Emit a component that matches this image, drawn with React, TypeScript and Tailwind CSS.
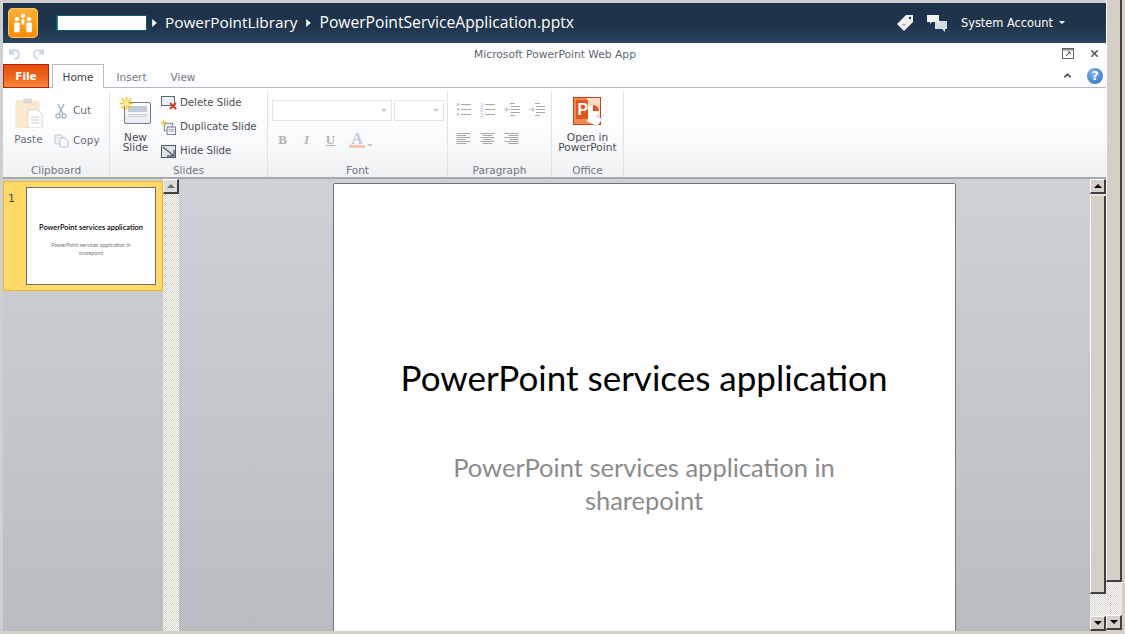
import type { ReactNode } from "react";
import { ChevronUp, X } from "lucide-react";

const ribbonFont = "font-['DejaVu_Sans',sans-serif]";

function GroupLabel({ children }: { children: ReactNode }) {
  return (
    <div className={`absolute -bottom-[2px] left-0 right-0 h-[17px] text-center text-[10.5px] leading-[17px] text-[#6e7686] ${ribbonFont}`}>
      {children}
    </div>
  );
}

function RibbonGroup({ width, label, children }: { width: string; label: string; children: ReactNode }) {
  return (
    <div className={`relative mt-[4px] h-[85px] shrink-0 border-r border-[#dfe2e7] ${width}`}>
      {children}
      <GroupLabel>{label}</GroupLabel>
    </div>
  );
}

function SparkIcon({ className }: { className: string }) {
  return (
    <svg viewBox="0 0 12 12" className={className}>
      <path d="M6 0v12M0 6h12M1.5 1.5l9 9M10.5 1.5l-9 9" stroke="#f4c92e" strokeWidth="1.6" />
      <rect x="4" y="4" width="4" height="4" fill="#fff3a8" />
    </svg>
  );
}

function SlideRow({ icon, label }: { icon: ReactNode; label: string }) {
  return (
    <div className="flex h-[24px] items-center gap-[3px]">
      <span className="flex w-[17px] justify-center">{icon}</span>
      <span className="text-[10.2px] text-[#4c4c55]">{label}</span>
    </div>
  );
}

function LinesIcon({ widths, align }: { widths: number[]; align: "start" | "center" | "end" }) {
  const x = (w: number) => (align === "start" ? 0 : align === "center" ? (14 - w) / 2 : 14 - w);
  return (
    <svg viewBox="0 0 14 14" className="h-[14px] w-[15px]">
      {widths.map((w, i) => (
        <rect key={i} x={x(w)} y={1 + i * 2} width={w} height="1" fill="#a8a8a8" />
      ))}
    </svg>
  );
}

function ListIcon({ numbered }: { numbered?: boolean }) {
  return (
    <svg viewBox="0 0 15 14" className="h-[14px] w-[15px]">
      {[1, 6, 11].map((y, i) => (
        <g key={y}>
          {numbered ? (
            <text x="0.5" y={y + 2.5} fontSize="5" fontWeight="700" fill="#b7c6de" fontFamily="Liberation Sans, sans-serif">
              {i + 1}
            </text>
          ) : (
            <circle cx="2" cy={y + 0.5} r="1.4" fill="#bccae0" />
          )}
          <rect x="5" y={y} width="10" height="1" fill="#a8a8a8" />
        </g>
      ))}
    </svg>
  );
}

function IndentIcon({ flip }: { flip?: boolean }) {
  return (
    <svg viewBox="0 0 16 14" className="h-[14px] w-[16px]">
      {[0, 3, 6, 9, 12].map((y, i) => (
        <rect key={y} x={i === 0 || i === 4 ? 6 : 7} y={y} width={i === 0 || i === 4 ? 5 : 9} height="1" fill="#a8a8a8" />
      ))}
      <path d={flip ? "M0 6h3V4l3 2.5L3 9V7H0z" : "M6 6H3V4L0 6.5 3 9V7h3z"} fill="#bccae0" />
    </svg>
  );
}

const thumbClass =
  "w-full shrink-0 border-b-2 border-l border-r-2 border-[#404040] border-l-white bg-[#d4d0c8]";

function Track({ className, children }: { className: string; children: ReactNode }) {
  return (
    <div className={`flex w-[16px] shrink-0 flex-col bg-[repeating-conic-gradient(#d4d0c8_0_25%,#ffffff_0_50%)] bg-[length:2px_2px] ${className}`}>
      {children}
    </div>
  );
}

function ArrowButton({ direction, muted }: { direction: "up" | "down"; muted?: boolean }) {
  return (
    <div
      className={`flex h-[15px] w-full shrink-0 items-center justify-center border-b-2 border-l border-r-2 border-t border-[#404040] border-l-white border-t-white ${
        muted ? "bg-[#dcdcdc]" : "bg-[#d4d0c8]"
      }`}
    >
      <svg viewBox="0 0 8 4" className="h-[4px] w-[8px]">
        <path d={direction === "up" ? "M0 4h8L4 0z" : "M0 0h8L4 4z"} fill={muted ? "#6e6e6e" : "#000"} />
      </svg>
    </div>
  );
}

function Caret({ className }: { className: string }) {
  return (
    <svg viewBox="0 0 4 7" className={`h-[8px] w-[5px] ${className}`}>
      <path d="M0 0l4 3.5L0 7z" fill="#fff" />
    </svg>
  );
}

export default function App() {
  return (
    <div className="flex h-[634px] w-[1125px] overflow-hidden bg-[#d4d0c8]">
      <div className="w-[3px] shrink-0 bg-[#cfcfcf]" />
      <div className="flex w-[1103px] shrink-0 flex-col">
        <div className="h-[3px] shrink-0 bg-[#cfcfcf]" />

        {/* site bar */}
        <header className="flex h-[40px] shrink-0 items-center bg-[linear-gradient(180deg,#1d3249_0%,#1f354d_60%,#2c445e_100%)] text-white">
          <div className="ml-[5px] flex h-[30px] w-[30px] items-center justify-center rounded-[5px] bg-[linear-gradient(180deg,#ffb13c_0%,#ff9c12_55%,#f48a06_100%)] shadow-[inset_0_0_0_1px_#ffc266]">
            <svg viewBox="0 0 20 20" className="h-[22px] w-[22px]">
              <circle cx="10" cy="3.5" r="2" fill="#fff" />
              <circle cx="4.5" cy="6.5" r="2" fill="#fff" />
              <circle cx="15.5" cy="6.5" r="2" fill="#fff" />
              <rect x="8.7" y="6.5" width="2.6" height="5" fill="#fff" />
              <rect x="2" y="9.5" width="5" height="9" rx="0.5" fill="#fff" />
              <rect x="13" y="9.5" width="5" height="9" rx="0.5" fill="#fff" />
            </svg>
          </div>
          <div className="ml-[19px] h-[14px] w-[89px] border-l border-[#1a8a8a] bg-white shadow-[0_0_0_1px_#0f5f64]" />
          <Caret className="ml-[6px]" />
          <span className="ml-[8px] font-['Open_Sans',sans-serif] text-[15.35px]">PowerPointLibrary</span>
          <Caret className="ml-[9px]" />
          <span className="ml-[8px] font-['Open_Sans',sans-serif] text-[15.65px]">PowerPointServiceApplication.pptx</span>
          <div className="ml-auto flex items-center">
            <svg viewBox="0 0 18 18" className="-ml-[2px] h-[18px] w-[18px]">
              <path d="M10 1h7v7l-9 9-7-7z" fill="#f0f0f0" />
              <circle cx="14" cy="4" r="1.2" fill="#2a3f56" />
              <path d="M6 10.5c1.5 1.2 3 .8 4-.8" stroke="#7a8a9c" strokeWidth="1" fill="none" />
            </svg>
            <svg viewBox="0 0 20 18" className="ml-[13px] h-[18px] w-[20px]">
              <path d="M0 1h12v7H5l-2 2V8H0z" fill="#f6f6f6" />
              <path d="M8 7h12v8h-2v3l-3-3H8z" fill="#d8dbe0" />
              <path d="M10 7h2V9h-2z" fill="#f6f6f6" />
            </svg>
            <span className={`ml-[14px] pt-[1px] text-[11.4px] ${ribbonFont}`}>System Account</span>
            <svg viewBox="0 0 6 3" className="ml-[6px] mr-[41px] h-[3px] w-[6px]">
              <path d="M0 0h6L3 3z" fill="#fff" />
            </svg>
          </div>
        </header>

        {/* title row */}
        <div className={`flex h-[21px] shrink-0 items-center bg-white pl-[6px] ${ribbonFont}`}>
          <svg viewBox="0 0 13 13" className="h-[12px] w-[12px]">
            <path d="M1 1v5h5M2 5.5A4.5 4.5 0 1 1 6 11.5" stroke="#c3d2e8" strokeWidth="2" fill="none" />
          </svg>
          <svg viewBox="0 0 13 13" className="ml-[11px] h-[12px] w-[12px]">
            <path d="M12 1v5H7M11 5.5A4.5 4.5 0 1 0 7 11.5" stroke="#d0d8e4" strokeWidth="2" fill="none" />
          </svg>
          <div className="flex-1 pl-[4px] pt-[4px] text-center text-[10.7px] text-[#5f6674]">Microsoft PowerPoint Web App</div>
          <svg viewBox="0 0 12 11" className="mr-[15px] h-[11px] w-[12px]">
            <rect x="0.5" y="0.5" width="11" height="10" fill="none" stroke="#666" />
            <rect x="1" y="1" width="10" height="1.5" fill="#888" />
            <path d="M4 8l4-4M5.5 4H8v2.5" stroke="#555" fill="none" />
          </svg>
          <X className="mr-[6px] h-[11px] w-[11px] text-[#555]" strokeWidth={3.5} />
        </div>

        {/* tabs */}
        <div className={`flex h-[24px] shrink-0 items-end border-b border-[#b7bbc1] bg-[linear-gradient(180deg,#ffffff,#fafbfd)] text-[10.5px] ${ribbonFont}`}>
          <div className="mb-[-1px] mr-[3px] flex h-[24px] w-[46px] items-center justify-center border border-[#b3200e] bg-[linear-gradient(180deg,#e2500f_0%,#f0641a_55%,#fb8c3c_100%)] pt-[1px] font-bold text-white">
            File
          </div>
          <div className="mb-[-1px] flex h-[24px] w-[52px] items-center justify-center border border-b-0 border-[#b7bbc1] bg-white pt-[2px] text-[#3b3b44]">
            Home
          </div>
          <div className="flex h-[23px] w-[55px] items-center justify-center pt-[5px] text-[#767a85]">Insert</div>
          <div className="flex h-[23px] w-[48px] items-center justify-center pt-[5px] text-[#767a85]">View</div>
          <div className="ml-auto mr-[3px] flex items-center self-center">
            <ChevronUp className="mr-[14px] h-[11px] w-[11px] text-[#555]" strokeWidth={3.5} />
            <div className="flex h-[16px] w-[16px] items-center justify-center rounded-full bg-[radial-gradient(circle_at_40%_30%,#7fb0ec,#2c6cc2)] text-[13px] font-bold text-white">
              ?
            </div>
          </div>
        </div>

        {/* ribbon */}
        <div className={`flex h-[91px] shrink-0 border-b-2 border-[#a5a9af] bg-[linear-gradient(180deg,#ffffff_0%,#fbfcfd_50%,#eff1f3_100%)] ${ribbonFont}`}>
          <RibbonGroup width="w-[107px]" label="Clipboard">
            <div className="flex pl-[12px] pt-[6px]">
              <div className="flex w-[27px] flex-col items-center">
                <svg viewBox="0 0 28 30" className="h-[30px] w-[28px]">
                  <rect x="1" y="3" width="23" height="27" rx="1" fill="#faeacb" stroke="#efe2cb" />
                  <rect x="8" y="0.5" width="9" height="5" rx="1" fill="#dbd9d6" />
                  <path d="M13 12h10l4 4v14H13z" fill="#fff" stroke="#d2d5da" />
                  <path d="M16 19h8M16 22h8M16 25h8" stroke="#c6cad1" />
                </svg>
                <span className="mt-[4px] text-[10.5px] text-[#6a6d76]">Paste</span>
              </div>
              <div className="ml-[12px] flex flex-col">
                <div className="mt-[3px] flex h-[20px] items-center gap-[5px]">
                  <svg viewBox="0 0 12 15" className="h-[15px] w-[14px]">
                    <path d="M3 0l5 10M9 0L4 10" stroke="#a9b6c9" strokeWidth="1.5" />
                    <circle cx="3" cy="12" r="2" fill="none" stroke="#a9b6c9" strokeWidth="1.4" />
                    <circle cx="9" cy="12" r="2" fill="none" stroke="#a9b6c9" strokeWidth="1.4" />
                  </svg>
                  <span className="text-[10.5px] text-[#6a6d76]">Cut</span>
                </div>
                <div className="mt-[10px] flex h-[20px] items-center gap-[4px]">
                  <svg viewBox="0 0 15 14" className="h-[14px] w-[15px]">
                    <path d="M1 1h6l2 2v7H1z" fill="#f1f2f4" stroke="#c2c8d2" />
                    <path d="M6 4h5l3 3v6H6z" fill="#fafafa" stroke="#bcc6d5" />
                  </svg>
                  <span className="text-[10.5px] text-[#6a6d76]">Copy</span>
                </div>
              </div>
            </div>
          </RibbonGroup>

          <RibbonGroup width="w-[158px]" label="Slides">
            <div className="flex pl-[10px]">
              <div className="flex w-[31px] flex-col items-center pt-[6px]">
                <div className="relative h-[26px] w-[30px]">
                  <div className="absolute bottom-0 right-0 h-[22px] w-[27px] rounded-[2px] border border-[#6f7d8f] bg-[linear-gradient(180deg,#ffffff,#e8ebf0)] p-[3px]">
                    <div className="h-[6px] bg-[#c3cbd7]" />
                    <div className="mt-[2px] h-[1px] bg-[#c3cbd7]" />
                    <div className="mt-[1px] h-[1px] bg-[#c3cbd7]" />
                  </div>
                  <SparkIcon className="absolute -left-[1px] -top-[1px] h-[13px] w-[13px]" />
                </div>
                <div className="mt-[8px] text-center text-[10.5px] leading-[10px] text-[#4c4c55]">
                  New
                  <br />
                  Slide
                </div>
              </div>
              <div className="ml-[9px] -mt-[1px] flex flex-col">
                <SlideRow
                  label="Delete Slide"
                  icon={
                    <svg viewBox="0 0 16 14" className="h-[14px] w-[16px]">
                      <rect x="0.5" y="0.5" width="13" height="9" fill="#eef0f3" stroke="#5a6a7d" />
                      <path d="M9 7l6 6M15 7l-6 6" stroke="#e33a22" strokeWidth="2" />
                    </svg>
                  }
                />
                <SlideRow
                  label="Duplicate Slide"
                  icon={
                    <svg viewBox="0 0 16 16" className="h-[15px] w-[15px]">
                      <rect x="3.5" y="3.5" width="9" height="8" fill="#eef1f5" stroke="#6f7d8f" />
                      <rect x="6.5" y="7.5" width="9" height="8" fill="#f8f9fb" stroke="#6f7d8f" />
                      <path d="M8 10h6M8 12h6" stroke="#8ba0bb" />
                      <path d="M3 0v6M0 3h6M1 1l4 4M5 1L1 5" stroke="#f4c92e" />
                    </svg>
                  }
                />
                <SlideRow
                  label="Hide Slide"
                  icon={
                    <svg viewBox="0 0 15 13" className="h-[13px] w-[15px]">
                      <rect x="0.5" y="0.5" width="14" height="12" fill="#dfe3e9" stroke="#4f5d70" />
                      <path d="M2 2l11 9M13 5v6H6" stroke="#4f5d70" strokeWidth="1.3" fill="none" />
                    </svg>
                  }
                />
              </div>
            </div>
          </RibbonGroup>

          <RibbonGroup width="w-[180px]" label="Font">
            <div className="flex pl-[4px] pt-[8px]">
              <div className="flex h-[21px] w-[120px] items-center justify-end border border-[#e3e3e3] bg-white pr-[4px]">
                <svg viewBox="0 0 6 3" className="h-[3px] w-[6px]"><path d="M0 0h6L3 3z" fill="#c8c8c8" /></svg>
              </div>
              <div className="ml-[2px] flex h-[21px] w-[50px] items-center justify-end border border-[#e3e3e3] bg-white pr-[4px]">
                <svg viewBox="0 0 6 3" className="h-[3px] w-[6px]"><path d="M0 0h6L3 3z" fill="#c8c8c8" /></svg>
              </div>
            </div>
            <div className="flex items-center gap-[13px] pl-[9px] pt-[9px] font-['Liberation_Serif',serif] text-[13px] font-bold text-[#b4b4b4]">
              <span className="w-[11px] text-center">B</span>
              <span className="w-[11px] text-center italic">I</span>
              <span className="w-[11px] text-center underline">U</span>
              <div className="flex items-end">
                <div className="flex w-[16px] flex-col items-center">
                  <span className="text-[16px] leading-[13px] text-[#bccbdf]">A</span>
                  <div className="h-[3px] w-[16px] bg-[#f8c3b2]" />
                </div>
                <svg viewBox="0 0 6 3" className="mb-[1px] ml-[2px] h-[3px] w-[6px]"><path d="M0 0h6L3 3z" fill="#c8c8c8" /></svg>
              </div>
            </div>
          </RibbonGroup>

          <RibbonGroup width="w-[104px]" label="Paragraph">
            <div className="flex gap-[9px] pl-[8px] pt-[11px]">
              <ListIcon />
              <ListIcon numbered />
              <IndentIcon />
              <IndentIcon flip />
            </div>
            <div className="flex gap-[9px] pl-[8px] pt-[15px]">
              <LinesIcon widths={[14, 10, 14, 9, 14, 10]} align="start" />
              <LinesIcon widths={[14, 10, 14, 9, 14, 10]} align="center" />
              <LinesIcon widths={[14, 10, 14, 9, 14, 10]} align="end" />
            </div>
          </RibbonGroup>

          <RibbonGroup width="w-[72px]" label="Office">
            <div className="flex flex-col items-center pt-[5px]">
              <svg viewBox="0 0 30 30" className="h-[30px] w-[30px]">
                <rect x="0.5" y="0.5" width="27" height="27" fill="#f08a4e" stroke="#c8401a" />
                <path d="M14 1h13v24H14z" fill="#f9d9c4" />
                <path d="M16 17l13 5-5 7-10-5z" fill="#fff" stroke="#d8d8d8" />
                <circle cx="20" cy="14" r="6" fill="#fff" />
                <path d="M20 14V8a6 6 0 0 1 6 6z" fill="#e2501f" />
                <rect x="3" y="3" width="12" height="19" fill="#e0581f" />
                <text x="4.5" y="18" fontSize="16" fontWeight="700" fill="#fff" fontFamily="Liberation Sans, sans-serif">P</text>
              </svg>
              <div className="mt-[5px] text-center text-[10.6px] leading-[10px] text-[#4c4c55]">
                Open in
                <br />
                PowerPoint
              </div>
            </div>
          </RibbonGroup>
        </div>

        {/* workspace */}
        <div className="flex h-[452px] shrink-0 bg-[linear-gradient(180deg,#ced1d6_0%,#b9bcc1_100%)]">
          <aside className="w-[160px] shrink-0 pt-[2px]">
            <div className={`flex h-[110px] border border-[#eeb42c] bg-[#ffd966] ${ribbonFont}`}>
              <span className="w-[22px] pl-[4px] pt-[9px] text-[11px] text-[#4a4a4a]">1</span>
              <div className="mt-[5px] flex h-[98px] w-[130px] flex-col items-center border border-[#6b6f78] bg-white pt-[35px] font-['Lato',sans-serif]">
                <span className="text-[7.4px] font-semibold leading-[9px] text-black">PowerPoint services application</span>
                <span className="mt-[9px] w-[100px] text-center text-[5.3px] leading-[8px] text-[#777]">
                  PowerPoint services application in sharepoint
                </span>
              </div>
            </div>
          </aside>
          <Track className="h-full">
            <ArrowButton direction="up" muted />
            <div className="flex-1" />
          </Track>
          <main className="flex min-w-0 flex-1 justify-center overflow-hidden pl-[19px] pt-[4px]">
            <div className="flex h-[460px] w-[623px] shrink-0 flex-col items-center rounded-t-[2px] border border-[#70747a] bg-white pt-[171px] font-['Lato',sans-serif]">
              <h1 className="text-[35px] font-normal leading-[44px] text-black">PowerPoint services application</h1>
              <p className="mt-[52px] w-[420px] text-center text-[25.5px] leading-[33px] text-[#8b8b8b]">
                PowerPoint services application in sharepoint
              </p>
            </div>
          </main>
          <Track className="h-full">
            <ArrowButton direction="up" />
            <div className={`mt-[2px] h-[398px] ${thumbClass}`} />
            <div className="flex-1" />
            <ArrowButton direction="down" />
          </Track>
        </div>
        <div className="flex-1 bg-[#d4d0c8]" />
      </div>
      <Track className="h-[630px]">
        <div className={`h-[582px] ${thumbClass}`} />
        <div className="flex-1" />
        <ArrowButton direction="down" />
      </Track>
    </div>
  );
}
